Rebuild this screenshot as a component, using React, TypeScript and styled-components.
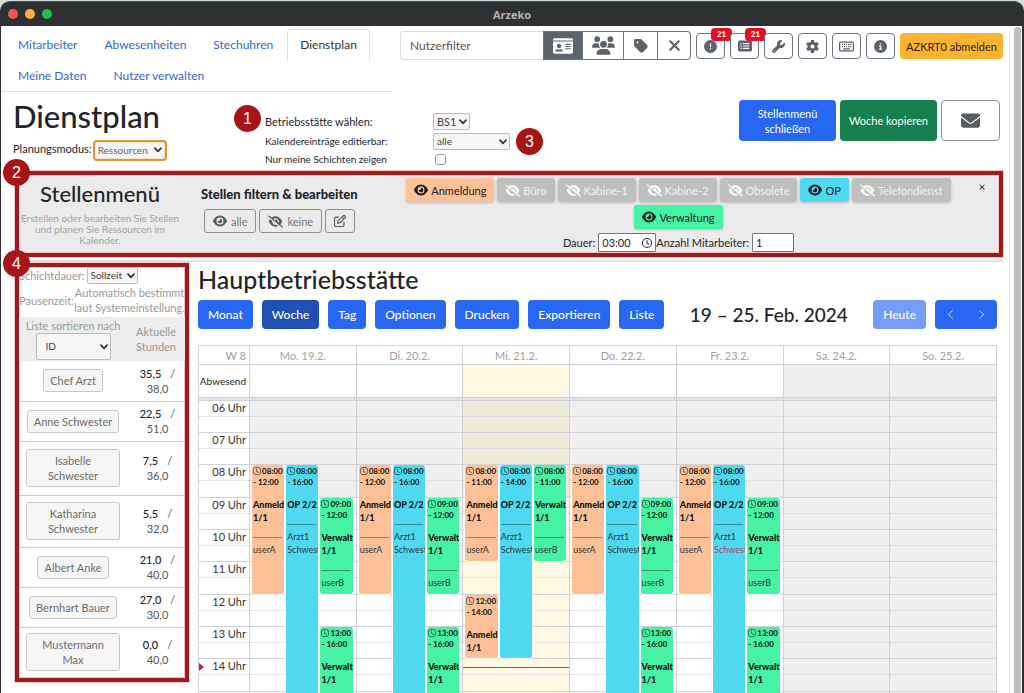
import React from "react";
import styled, { createGlobalStyle, css } from "styled-components";
import {
  FaUsers,
  FaTag,
  FaXmark,
  FaCircleExclamation,
  FaRectangleList,
  FaWrench,
  FaGear,
  FaRegKeyboard,
  FaCircleInfo,
  FaEnvelope,
  FaEye,
  FaEyeSlash,
  FaRegPenToSquare,
  FaRegClock,
} from "react-icons/fa6";
import { FaIdCard } from "react-icons/fa";
import { BsClock, BsChevronLeft, BsChevronRight } from "react-icons/bs";

const GlobalStyle = createGlobalStyle`
  * { box-sizing: border-box; }
  body {
    margin: 0;
    background: #d5e0dc;
    color: #212529;
    font-family: Lato, "Liberation Sans", sans-serif;
    font-size: 12px;
    line-height: 15px;
  }
  button, input, select { font: inherit; color: inherit; margin: 0; }
  button { cursor: pointer; }
  h1, h2, h3, p { margin: 0; font-weight: 500; }
`;

/* ---------- window ---------- */

const Window = styled.div`
  display: flex;
  flex-direction: column;
  height: 100vh;
  padding-top: 1px;
  overflow: hidden;
`;

const TitleBar = styled.header`
  display: grid;
  grid-template-columns: 1fr auto 1fr;
  align-items: center;
  flex: none;
  height: 25px;
  padding: 0 8px;
  background: #2f3032;
  border-top: 1px solid #4c4e50;
  border-radius: 10px 10px 0 0;
  color: #b4b5b6;
  font-family: "Open Sans", sans-serif;
  font-size: 11px;
  font-weight: 700;
`;

const Lights = styled.div`
  display: flex;
  gap: 7px;
`;

const Light = styled.span<{ $color: string }>`
  width: 10px;
  height: 10px;
  border-radius: 50%;
  background: ${(p) => p.$color};
`;

const Viewport = styled.div`
  display: flex;
  flex: 1;
  min-height: 0;
  background: #fff;
  border: solid #2f3032;
  border-width: 0 2px 0 1px;
`;

const Page = styled.main`
  flex: 1;
  min-width: 0;
  overflow: hidden;
  padding-right: 6px;
`;

const ScrollTrack = styled.div`
  flex: none;
  width: 13px;
  padding: 1px 1px 0 4px;
  background: #fafafa;
  border-left: 1px solid #ececec;
`;

const ScrollThumb = styled.div`
  height: 100%;
  border-radius: 4px 4px 0 0;
  background: #bdbdbd;
`;

/* ---------- shared controls ---------- */

const SelectWrap = styled.span<{ $width: number; $height?: number; $pad?: number; $size?: number; $focus?: boolean }>`
  display: inline-grid;
  align-items: center;
  width: ${(p) => p.$width}px;
  height: ${(p) => p.$height ?? 16}px;
  color: #444;
  font-size: ${(p) => p.$size ?? 10}px;
  select {
    grid-area: 1 / 1;
    width: 100%;
    height: 100%;
    padding: 0 ${(p) => p.$pad ?? 3}px;
    appearance: none;
    background: #f6f6f6;
    border: 1px solid #bbb;
    border-radius: 2px;
    ${(p) => p.$focus && css`outline: 2px solid #dc953c; outline-offset: 0; border-color: #f3e3cf; color: #666;`}
  }
  svg {
    grid-area: 1 / 1;
    justify-self: end;
    margin-right: 3px;
    pointer-events: none;
  }
`;

function Select(props: {
  id: string;
  value: string;
  width: number;
  height?: number;
  pad?: number;
  size?: number;
  focus?: boolean;
}) {
  return (
    <SelectWrap $width={props.width} $height={props.height} $pad={props.pad} $size={props.size} $focus={props.focus}>
      <select id={props.id} defaultValue={props.value}>
        <option>{props.value}</option>
      </select>
      <svg width="8" height="6" viewBox="0 0 8 6" fill="none" stroke="#333" strokeWidth="1.7" strokeLinecap="round" strokeLinejoin="round">
        <path d="M1 1.2 4 4.4 7 1.2" />
      </svg>
    </SelectWrap>
  );
}

const Marker = styled.span<{ $left: number; $top: number }>`
  position: absolute;
  z-index: 5;
  left: ${(p) => p.$left}px;
  top: ${(p) => p.$top}px;
  display: flex;
  align-items: center;
  justify-content: center;
  width: 27px;
  height: 27px;
  border-radius: 50%;
  background: #a81518;
  color: #fff;
  font-family: "Liberation Sans", sans-serif;
  font-size: 16px;
`;

const highlight = css`
  position: relative;
  border: 4px solid #9c1c1e;
  box-shadow: 0 0 0 1px #f6c9c9, inset 0 0 0 1px #f3c4c4;
`;

/* ---------- top navigation ---------- */

const TopBar = styled.div`
  display: flex;
  align-items: flex-start;
  padding-top: 3px;
`;

const Tabs = styled.nav`
  display: flex;
  flex-wrap: wrap;
  flex: 0 1 391px;
  column-gap: 1px;
  padding-left: 4px;
  border-bottom: 1px solid #dcdfe2;
`;

const Tab = styled.a<{ $active?: boolean }>`
  padding: 7px 12px 8px;
  border: 1px solid transparent;
  border-bottom: 0;
  border-radius: 4px 4px 0 0;
  color: #2f68c8;
  font-size: 12px;
  text-decoration: none;
  ${(p) => p.$active && css`border-color: #dcdfe2; color: #333;`}
`;

const Filter = styled.div`
  display: flex;
  flex: 1;
  min-width: 0;
  height: 29px;
  margin: 2px 5px 0 8px;
`;

const FilterInput = styled.input`
  flex: 1;
  min-width: 0;
  padding: 0 9px;
  border: 1px solid #dcdfe2;
  border-right: 0;
  border-radius: 4px 0 0 4px;
  background: #fff;
  &::placeholder { color: #555; opacity: 1; }
`;

const FilterButton = styled.button<{ $width: number; $active?: boolean }>`
  display: flex;
  align-items: center;
  justify-content: center;
  width: ${(p) => p.$width}px;
  padding: 0;
  border: 1px solid #6c757d;
  border-left-width: ${(p) => (p.$active ? 1 : 0)}px;
  background: ${(p) => (p.$active ? "#5c656d" : "#fff")};
  color: ${(p) => (p.$active ? "#fff" : "#5c636a")};
  &:last-child { border-radius: 0 4px 4px 0; }
`;

const Tools = styled.div`
  display: flex;
  gap: 5px;
  padding-top: 4px;
`;

const ToolButton = styled.button`
  position: relative;
  display: flex;
  align-items: center;
  justify-content: center;
  width: 29px;
  height: 26px;
  padding: 0;
  border: 1px solid #6c757d;
  border-radius: 4px;
  background: #fff;
  color: #5c636a;
`;

const Count = styled.span`
  position: absolute;
  top: -6px;
  right: -8px;
  width: 21px;
  height: 13px;
  border-radius: 4px;
  background: #ea0a28;
  color: #fff;
  font-size: 8px;
  font-weight: 900;
  line-height: 13px;
`;

const Logout = styled.button`
  width: 103px;
  height: 26px;
  padding: 0;
  border: 0;
  border-radius: 4px;
  background: #fdb330;
  color: #2b2410;
  font-size: 11px;
  white-space: nowrap;
`;

/* ---------- page heading ---------- */

const Heading = styled.section`
  display: grid;
  grid-template-columns: 252px 1fr auto;
  height: 79px;
  padding: 0 3px 0 12px;
`;

const PageTitle = styled.h1`
  padding-top: 5px;
  font-size: 31px;
  line-height: 39px;
`;

const Mode = styled.div`
  display: flex;
  align-items: center;
  gap: 3px;
  height: 25px;
  font-size: 11px;
`;

const Options = styled.div`
  position: relative;
  display: grid;
  grid-template-columns: 168px auto;
  grid-template-rows: 20px 20px 16px;
  align-items: center;
  align-content: start;
  justify-content: start;
  padding-top: 19px;
  font-size: 10px;
`;

const SiteLabel = styled.label`
  font-size: 11px;
`;

const Check = styled.input`
  appearance: none;
  width: 11px;
  height: 11px;
  margin: 0 0 0 2px;
  border: 1px solid #999;
  border-radius: 3px;
  background: #fff;
`;

const Actions = styled.div`
  display: flex;
  gap: 4px;
  padding-top: 8px;
`;

const ActionButton = styled.button<{ $bg: string; $outline?: boolean }>`
  width: ${(p) => (p.$outline ? 59 : 97)}px;
  height: 41px;
  padding: 0;
  border: ${(p) => (p.$outline ? "1px solid #8b9197" : "0")};
  border-radius: 4px;
  background: ${(p) => p.$bg};
  color: ${(p) => (p.$outline ? "#565e64" : "#fff")};
  font-size: 11px;
  svg { display: block; margin: 0 auto; }
`;

/* ---------- position menu ---------- */

const MenuPanel = styled.section`
  ${highlight}
  display: grid;
  grid-template-columns: 162px 211px 1fr 34px;
  height: 86px;
  margin: 0 0 0 14px;
  background: #ebebeb;
`;

const MenuIntro = styled.div`
  padding-top: 6px;
  text-align: center;
  color: #a3a3a3;
  font-size: 10px;
  line-height: 11px;
`;

const MenuTitle = styled.h2`
  margin-bottom: 6px;
  color: #212529;
  font-size: 22px;
  line-height: 26px;
`;

const MenuFilter = styled.div`
  padding: 11px 0 0 20px;
`;

const FilterTitle = styled.h3`
  font-size: 13px;
  font-weight: 900;
  line-height: 16px;
  white-space: nowrap;
`;

const SmallButtons = styled.div`
  display: flex;
  gap: 3px;
  padding: 7px 0 0 3px;
`;

const SmallButton = styled.button`
  display: flex;
  align-items: center;
  gap: 4px;
  height: 24px;
  padding: 0 8px;
  border: 1px solid #8b9197;
  border-radius: 3px;
  background: none;
  color: #6c757d;
  font-size: 11px;
  svg { color: #565e64; }
`;

const ChipArea = styled.div`
  padding-top: 3px;
`;

const Chips = styled.div`
  display: flex;
  flex-wrap: wrap;
  justify-content: center;
  gap: 3px;
`;

const Chip = styled.button<{ $bg: string; $off?: boolean }>`
  display: flex;
  align-items: center;
  gap: 3px;
  height: 24px;
  padding: 0 8px;
  border: 0;
  border-radius: 3px;
  background: ${(p) => p.$bg};
  box-shadow: 0 1px 3px rgba(0, 0, 0, 0.2);
  color: ${(p) => (p.$off ? "#f3f3f3" : "#1c1c1c")};
  font-size: 11px;
  svg { color: ${(p) => (p.$off ? "#fff" : "#10201c")}; }
`;

const Amounts = styled.div`
  display: flex;
  align-items: center;
  justify-content: center;
  padding-top: 4px;
  font-size: 11px;
`;

const TimeField = styled.span`
  display: inline-grid;
  align-items: center;
  width: 58px;
  margin-left: 3px;
  svg { grid-area: 1 / 1; justify-self: end; margin-right: 4px; }
  input { grid-area: 1 / 1; }
`;

const Field = styled.input`
  width: 100%;
  height: 19px;
  padding: 0 3px;
  border: 1px solid #777;
  border-radius: 1px;
  background: #fff;
`;

const CountField = styled(Field)`
  width: 42px;
  margin-left: 3px;
`;

const CloseButton = styled.button`
  align-self: start;
  justify-self: center;
  margin-top: 4px;
  padding: 0 6px;
  border: 0;
  background: none;
  font-size: 12px;
`;

const Rule = styled.hr`
  height: 2px;
  margin: 3px 0 0 14px;
  border: 0;
  background: #e2dfe2;
`;

/* ---------- staff list ---------- */

const Split = styled.div`
  display: flex;
  align-items: flex-start;
`;

const Staff = styled.aside`
  ${highlight}
  flex: none;
  width: 174px;
  margin: 1px 9px 0 14px;
  padding-bottom: 1px;
  color: #999;
  font-size: 11px;
`;

const Duration = styled.div`
  display: flex;
  align-items: center;
  gap: 2px;
  height: 16px;
`;

const Pause = styled.div`
  display: grid;
  grid-template-columns: 55px 1fr;
  align-items: center;
  height: 34px;
  text-align: center;
  white-space: nowrap;
`;

const StaffTable = styled.table`
  width: 100%;
  border-collapse: collapse;
  table-layout: fixed;
  th {
    height: 44px;
    padding: 0;
    background: #ededed;
    font-weight: 400;
  }
  th:last-child { width: 58px; }
  td {
    padding: 0;
    text-align: center;
    border-bottom: 1px solid #c9c9c9;
  }
  td:last-child { padding-left: 3px; }
  tr:last-child td { border-bottom: 0; }
`;

const StaffRow = styled.tr<{ $height: number }>`
  height: ${(p) => p.$height}px;
`;

const NameButton = styled.button<{ $wide?: boolean }>`
  ${(p) => p.$wide && css`width: 94px;`}
  padding: 3px 6px;
  border: 1px solid #c8c8c8;
  border-radius: 3px;
  background: #f6f6f6;
  color: #6c6c6c;
  font-size: 11px;
`;

const Hours = styled.span`
  display: block;
  color: #555;
  b { margin-right: 9px; color: #222; font-weight: 500; }
`;

/* ---------- calendar ---------- */

const Calendar = styled.section`
  flex: 1;
  min-width: 0;
  padding-right: 6px;
`;

const CalendarTitle = styled.h2`
  padding-top: 1px;
  font-size: 25px;
  line-height: 32px;
`;

const Toolbar = styled.div`
  display: flex;
  align-items: center;
  gap: 9px;
  margin: 5px 0 16px;
`;

const CalButton = styled.button<{ $bg?: string }>`
  height: 29px;
  padding: 0 10px;
  border: 0;
  border-radius: 4px;
  background: ${(p) => p.$bg ?? "#2867f2"};
  color: #fff;
  font-size: 12px;
  font-weight: 500;
`;

const Period = styled.h2`
  flex: 1;
  text-align: center;
  font-size: 19px;
  line-height: 24px;
  white-space: nowrap;
`;

const Pager = styled.div`
  display: flex;
`;

const PagerButton = styled.button`
  display: flex;
  align-items: center;
  justify-content: center;
  width: 31px;
  height: 29px;
  padding: 0;
  border: 0;
  background: #2867f2;
  color: #e3ebff;
  &:first-child { border-radius: 4px 0 0 4px; }
  &:last-child { border-radius: 0 4px 4px 0; }
`;

const LINE = "#d0d2d6";

const WeekTable = styled.table`
  width: 100%;
  border-spacing: 0;
  table-layout: fixed;
  border-top: 1px solid ${LINE};
  border-left: 1px solid ${LINE};
  th, td {
    padding: 0;
    border-right: 1px solid ${LINE};
    border-bottom: 1px solid ${LINE};
    font-weight: 400;
  }
  thead th { height: 19px; color: #a0a0a0; font-size: 11px; }
  tbody th { height: 33px; font-size: 10px; padding-right: 3px; text-align: right; }
  thead th:first-child { width: 51px; padding-right: 3px; text-align: right; }
`;

const AbsenceCell = styled.td<{ $bg: string }>`
  background: ${(p) => p.$bg};
`;

const Divider = styled.div`
  height: 3px;
  border: solid #ccd2d8;
  border-width: 0 1px 1px;
  background: #e2e5e8;
`;

const slotRows = css`
  display: grid;
  grid-auto-rows: 16px 16px 16px 16px 16px 17px;
`;

const TimeGrid = styled.div`
  display: grid;
  grid-template-columns: 51px repeat(7, 1fr);
  border-left: 1px solid ${LINE};
`;

const Axis = styled.div`
  ${slotRows}
  border-right: 1px solid ${LINE};
`;

const Slot = styled.div<{ $row: number; $bg: string }>`
  grid-column: 1 / -1;
  grid-row: ${(p) => p.$row};
  padding-right: 3px;
  background: ${(p) => p.$bg};
  border-bottom: 1px ${(p) => (p.$row % 2 ? "dotted" : "solid")} ${LINE};
  color: #333;
  font-size: 11px;
  line-height: 14px;
  text-align: right;
`;

const NowArrow = styled.span<{ $row: number }>`
  grid-column: 1 / -1;
  grid-row: ${(p) => p.$row};
  align-self: center;
  justify-self: start;
  border-left: 5px solid #c2243c;
  border-top: 4px solid transparent;
  border-bottom: 4px solid transparent;
`;

const Day = styled.div`
  ${slotRows}
  grid-template-columns: 1px repeat(3, minmax(0, 1fr)) 2px;
  border-right: 1px solid ${LINE};
`;

const Shift = styled.article<{ $lane: number; $start: number; $end: number; $bg: string }>`
  grid-column: ${(p) => p.$lane + 1};
  grid-row: ${(p) => p.$start} / ${(p) => p.$end};
  z-index: 1;
  min-width: 0;
  padding: 1px 0 0 1px;
  overflow: hidden;
  border: solid rgba(255, 255, 255, 0.8);
  border-width: 0 1px 1px;
  border-radius: 3px;
  background: ${(p) => p.$bg};
  background-clip: padding-box;
  color: #111;
  font-size: 9px;
  line-height: 13px;
  white-space: nowrap;
`;

const ShiftTime = styled.div`
  margin-bottom: 10px;
  font-size: 8px;
  font-weight: 700;
  line-height: 11px;
  svg { margin-right: 1px; vertical-align: -1px; }
`;

const ShiftTitle = styled.div`
  font-weight: 900;
`;

const ShiftPeople = styled.div`
  margin: 13px 2px 0 0;
  padding-top: 5px;
  border-top: 1px solid rgba(0, 0, 0, 0.35);
  color: #2c3a3a;
`;

const Person = styled.div<{ $alert?: boolean }>`
  ${(p) => p.$alert && css`color: #b8405f;`}
`;

const NowLine = styled.span<{ $row: number }>`
  grid-column: 1 / -1;
  grid-row: ${(p) => p.$row};
  align-self: center;
  z-index: 2;
  height: 1px;
  background: #cc3a48;
`;

/* ---------- data ---------- */

const PEACH = "#fec097";
const CYAN = "#4ed9f1";
const GREEN = "#46f2a3";
const GREY = "#bfbfbf";

const chips = [
  { name: "Anmeldung", bg: PEACH, on: true },
  { name: "Büro", bg: GREY },
  { name: "Kabine-1", bg: GREY },
  { name: "Kabine-2", bg: GREY },
  { name: "Obsolete", bg: GREY },
  { name: "OP", bg: CYAN, on: true },
  { name: "Telefondienst", bg: GREY },
  { name: "Verwaltung", bg: GREEN, on: true },
];

const staff = [
  { name: "Chef Arzt", now: "35,5", max: "38,0", height: 40 },
  { name: "Anne Schwester", now: "22,5", max: "51,0", height: 40 },
  { name: "Isabelle Schwester", now: "7,5", max: "36,0", height: 54, wide: true },
  { name: "Katharina Schwester", now: "5,5", max: "32,0", height: 52, wide: true },
  { name: "Albert Anke", now: "21,0", max: "40,0", height: 40 },
  { name: "Bernhart Bauer", now: "27,0", max: "30,0", height: 40 },
  { name: "Mustermann Max", now: "0,0", max: "40,0", height: 50, wide: true },
];

type ShiftData = {
  lane: number;
  from: number;
  to: number;
  bg: string;
  title: string;
  ratio?: string;
  people: string[];
  alert?: string;
};

const desk = (from: number, to: number, people = ["userA"]): ShiftData => ({
  lane: 1, from, to, bg: PEACH, title: "Anmeldung", ratio: "1/1", people,
});
const op = (to: number, alert?: string): ShiftData => ({
  lane: 2, from: 8, to, bg: CYAN, title: "OP 2/2", people: ["Arzt1", "Schwester"], alert,
});
const admin = (from: number, to: number, people = ["userB"]): ShiftData => ({
  lane: 3, from, to, bg: GREEN, title: "Verwaltung", ratio: "1/1", people,
});

const regular = [desk(8, 12), op(16), admin(9, 12), admin(13, 16, [])];

const days: { label: string; today?: boolean; weekend?: boolean; shifts: ShiftData[] }[] = [
  { label: "Mo. 19.2.", shifts: regular },
  { label: "Di. 20.2.", shifts: regular },
  { label: "Mi. 21.2.", today: true, shifts: [desk(8, 11), op(14), admin(8, 11), desk(12, 14, [])] },
  { label: "Do. 22.2.", shifts: regular },
  { label: "Fr. 23.2.", shifts: [desk(8, 12), op(16, "Schwester"), admin(9, 12), admin(13, 16, [])] },
  { label: "Sa. 24.2.", weekend: true, shifts: [] },
  { label: "So. 25.2.", weekend: true, shifts: [] },
];

const FIRST_HOUR = 6;
const LAST_HOUR = 16;
const slots = Array.from({ length: (LAST_HOUR - FIRST_HOUR) * 2 }, (_, i) => i + 1);
const rowOf = (hour: number) => (hour - FIRST_HOUR) * 2 + 1;
const two = (n: number) => String(n).padStart(2, "0");

function slotColor(row: number, day: { today?: boolean; weekend?: boolean }) {
  const closed = day.weekend || row < rowOf(9);
  if (day.today) return closed ? "#eeebd9" : "#fff8e3";
  return closed ? "#efefef" : "#fff";
}

function ShiftCard({ shift }: { shift: ShiftData }) {
  return (
    <Shift $lane={shift.lane} $start={rowOf(shift.from)} $end={rowOf(shift.to)} $bg={shift.bg}>
      <ShiftTime>
        <BsClock size={8} />
        {two(shift.from)}:00
        <br />- {shift.to}:00
      </ShiftTime>
      <ShiftTitle>
        {shift.title}
        {shift.ratio && <div>{shift.ratio}</div>}
      </ShiftTitle>
      {shift.people.length > 0 && (
        <ShiftPeople>
          {shift.people.map((p) => (
            <Person key={p} $alert={p === shift.alert}>{p}</Person>
          ))}
        </ShiftPeople>
      )}
    </Shift>
  );
}

export default function App() {
  return (
    <>
      <GlobalStyle />
      <Window>
        <TitleBar>
          <Lights>
            <Light $color="#f7545a" />
            <Light $color="#fbb03f" />
            <Light $color="#1fc14b" />
          </Lights>
          Arzeko
        </TitleBar>
        <Viewport>
          <Page>
            <TopBar>
              <Tabs>
                <Tab href="#mitarbeiter">Mitarbeiter</Tab>
                <Tab href="#abwesenheiten">Abwesenheiten</Tab>
                <Tab href="#stechuhren">Stechuhren</Tab>
                <Tab href="#dienstplan" $active aria-current="page">Dienstplan</Tab>
                <Tab href="#daten">Meine Daten</Tab>
                <Tab href="#nutzer">Nutzer verwalten</Tab>
              </Tabs>
              <Filter>
                <FilterInput aria-label="Nutzerfilter" placeholder="Nutzerfilter" />
                <FilterButton $width={40} $active aria-label="Karten"><FaIdCard size={20} /></FilterButton>
                <FilterButton $width={41} aria-label="Gruppen"><FaUsers size={23} /></FilterButton>
                <FilterButton $width={34} aria-label="Schlagwort"><FaTag size={16} /></FilterButton>
                <FilterButton $width={33} aria-label="Filter leeren"><FaXmark size={17} /></FilterButton>
              </Filter>
              <Tools>
                <ToolButton aria-label="Warnungen"><FaCircleExclamation size={13} /><Count>21</Count></ToolButton>
                <ToolButton aria-label="Anträge"><FaRectangleList size={14} /><Count>21</Count></ToolButton>
                <ToolButton aria-label="Werkzeuge"><FaWrench size={13} /></ToolButton>
                <ToolButton aria-label="Einstellungen"><FaGear size={13} /></ToolButton>
                <ToolButton aria-label="Tastatur"><FaRegKeyboard size={15} /></ToolButton>
                <ToolButton aria-label="Info"><FaCircleInfo size={13} /></ToolButton>
                <Logout>AZKRT0 abmelden</Logout>
              </Tools>
            </TopBar>

            <Heading>
              <div>
                <PageTitle>Dienstplan</PageTitle>
                <Mode>
                  <label htmlFor="mode">Planungsmodus:</label>
                  <Select id="mode" value="Ressourcen" width={70} height={14} pad={2} focus />
                </Mode>
              </div>
              <Options>
                <Marker $left={-31} $top={13}>1</Marker>
                <Marker $left={251} $top={36}>3</Marker>
                <SiteLabel htmlFor="site">Betriebsstätte wählen:</SiteLabel>
                <Select id="site" value="BS1" width={37} size={11} />
                <label htmlFor="editable">Kalendereinträge editierbar:</label>
                <Select id="editable" value="alle" width={77} />
                <label htmlFor="mine">Nur meine Schichten zeigen</label>
                <Check id="mine" type="checkbox" />
              </Options>
              <Actions>
                <ActionButton $bg="#2867f2">Stellenmenü<br />schließen</ActionButton>
                <ActionButton $bg="#157f4d">Woche kopieren</ActionButton>
                <ActionButton $bg="#fff" $outline aria-label="Nachricht"><FaEnvelope size={19} /></ActionButton>
              </Actions>
            </Heading>

            <MenuPanel>
              <Marker $left={-16} $top={-16}>2</Marker>
              <MenuIntro>
                <MenuTitle>Stellenmenü</MenuTitle>
                Erstellen oder bearbeiten Sie Stellen und planen Sie Ressourcen im Kalender.
              </MenuIntro>
              <MenuFilter>
                <FilterTitle>Stellen filtern &amp; bearbeiten</FilterTitle>
                <SmallButtons>
                  <SmallButton><FaEye size={14} />alle</SmallButton>
                  <SmallButton><FaEyeSlash size={15} />keine</SmallButton>
                  <SmallButton aria-label="Bearbeiten"><FaRegPenToSquare size={12} /></SmallButton>
                </SmallButtons>
              </MenuFilter>
              <ChipArea>
                <Chips>
                  {chips.map((c) => (
                    <Chip key={c.name} $bg={c.bg} $off={!c.on}>
                      {c.on ? <FaEye size={14} /> : <FaEyeSlash size={15} />}
                      {c.name}
                    </Chip>
                  ))}
                </Chips>
                <Amounts>
                  <label htmlFor="duration">Dauer:</label>
                  <TimeField>
                    <Field id="duration" defaultValue="03:00" />
                    <FaRegClock size={10} />
                  </TimeField>
                  <label htmlFor="people">Anzahl Mitarbeiter:</label>
                  <CountField id="people" defaultValue="1" />
                </Amounts>
              </ChipArea>
              <CloseButton aria-label="Schließen">×</CloseButton>
            </MenuPanel>
            <Rule />

            <Split>
              <Staff>
                <Marker $left={-16} $top={-17}>4</Marker>
                <Duration>
                  <label htmlFor="shift">Schichtdauer:</label>
                  <Select id="shift" value="Sollzeit" width={51} />
                </Duration>
                <Pause>
                  <span>Pausenzeit:</span>
                  <span>Automatisch bestimmt<br />laut Systemeinstellung.</span>
                </Pause>
                <StaffTable>
                  <thead>
                    <tr>
                      <th scope="col">
                        <label htmlFor="sort">Liste sortieren nach</label>
                        <Select id="sort" value="ID" width={75} height={27} pad={9} />
                      </th>
                      <th scope="col">Aktuelle<br />Stunden</th>
                    </tr>
                  </thead>
                  <tbody>
                    {staff.map((s) => (
                      <StaffRow key={s.name} $height={s.height}>
                        <td><NameButton $wide={s.wide}>{s.name}</NameButton></td>
                        <td>
                          <Hours><b>{s.now}</b>/</Hours>
                          <Hours>{s.max}</Hours>
                        </td>
                      </StaffRow>
                    ))}
                  </tbody>
                </StaffTable>
              </Staff>

              <Calendar>
                <CalendarTitle>Hauptbetriebsstätte</CalendarTitle>
                <Toolbar>
                  <CalButton>Monat</CalButton>
                  <CalButton $bg="#2150b5">Woche</CalButton>
                  <CalButton>Tag</CalButton>
                  <CalButton>Optionen</CalButton>
                  <CalButton>Drucken</CalButton>
                  <CalButton>Exportieren</CalButton>
                  <CalButton>Liste</CalButton>
                  <Period>19 – 25. Feb. 2024</Period>
                  <CalButton $bg="#759df7">Heute</CalButton>
                  <Pager>
                    <PagerButton aria-label="Zurück"><BsChevronLeft size={11} /></PagerButton>
                    <PagerButton aria-label="Weiter"><BsChevronRight size={11} /></PagerButton>
                  </Pager>
                </Toolbar>
                <WeekTable>
                  <thead>
                    <tr>
                      <th scope="col">W 8</th>
                      {days.map((d) => <th scope="col" key={d.label}>{d.label}</th>)}
                    </tr>
                  </thead>
                  <tbody>
                    <tr>
                      <th scope="row">Abwesend</th>
                      {days.map((d) => (
                        <AbsenceCell key={d.label} $bg={slotColor(rowOf(LAST_HOUR), d)} />
                      ))}
                    </tr>
                  </tbody>
                </WeekTable>
                <Divider />
                <TimeGrid>
                  <Axis>
                    {slots.map((row) => (
                      <Slot key={row} $row={row} $bg="#fff">
                        {row % 2 === 1 && `${two(FIRST_HOUR + (row - 1) / 2)} Uhr`}
                      </Slot>
                    ))}
                    <NowArrow $row={rowOf(14)} />
                  </Axis>
                  {days.map((d) => (
                    <Day key={d.label}>
                      {slots.map((row) => <Slot key={row} $row={row} $bg={slotColor(row, d)} />)}
                      {d.shifts.map((s) => <ShiftCard key={`${s.lane}-${s.from}`} shift={s} />)}
                      {d.today && <NowLine $row={rowOf(14)} />}
                    </Day>
                  ))}
                </TimeGrid>
              </Calendar>
            </Split>
          </Page>
          <ScrollTrack><ScrollThumb /></ScrollTrack>
        </Viewport>
      </Window>
    </>
  );
}
